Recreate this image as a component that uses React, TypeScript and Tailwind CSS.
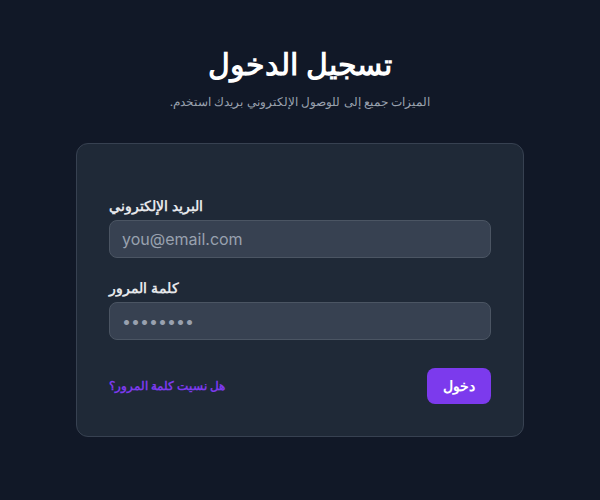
export default function App() {
  return (
    <div className="min-h-screen w-full bg-[#111827] flex justify-center pt-[46px] font-['Inter','Noto_Sans',sans-serif]">
      <div className="w-full max-w-md">
        {/* Header */}
        <div className="text-center">
          <h1 className="text-3xl font-bold text-white">تسجيل الدخول</h1>
          <p className="mt-3 text-xs text-gray-400">.الميزات جميع إلى للوصول الإلكتروني بريدك استخدم</p>
        </div>

        {/* Card */}
        <div className="mt-[33px] bg-[#1f2937] border border-[#374151] rounded-xl p-8">
          <form className="mt-5 space-y-5" onSubmit={(e) => e.preventDefault()}>
            <div>
              <label className="block mb-1 text-sm font-semibold text-gray-200">البريد الإلكتروني</label>
              <input
                type="email"
                placeholder="you@email.com"
                className="w-full px-3 py-1.5 text-base rounded-lg bg-[#374151] border border-[#4b5563] text-white placeholder-gray-400 outline-none"
              />
            </div>
            <div>
              <label className="block mb-1 text-sm font-semibold text-gray-200">كلمة المرور</label>
              <input
                type="password"
                defaultValue="password"
                className="w-full px-3 py-1.5 text-base rounded-lg bg-[#374151] border border-[#4b5563] text-gray-400 outline-none"
              />
            </div>
            <div className="flex items-center justify-between pt-2">
              <a href="#" className="text-xs font-semibold text-[#7c3aed]">هل نسيت كلمة المرور؟</a>
              <button type="submit" className="px-4 py-2 text-sm font-semibold text-white bg-[#7c3aed] rounded-lg">
                دخول
              </button>
            </div>
          </form>
        </div>
      </div>
    </div>
  );
}
